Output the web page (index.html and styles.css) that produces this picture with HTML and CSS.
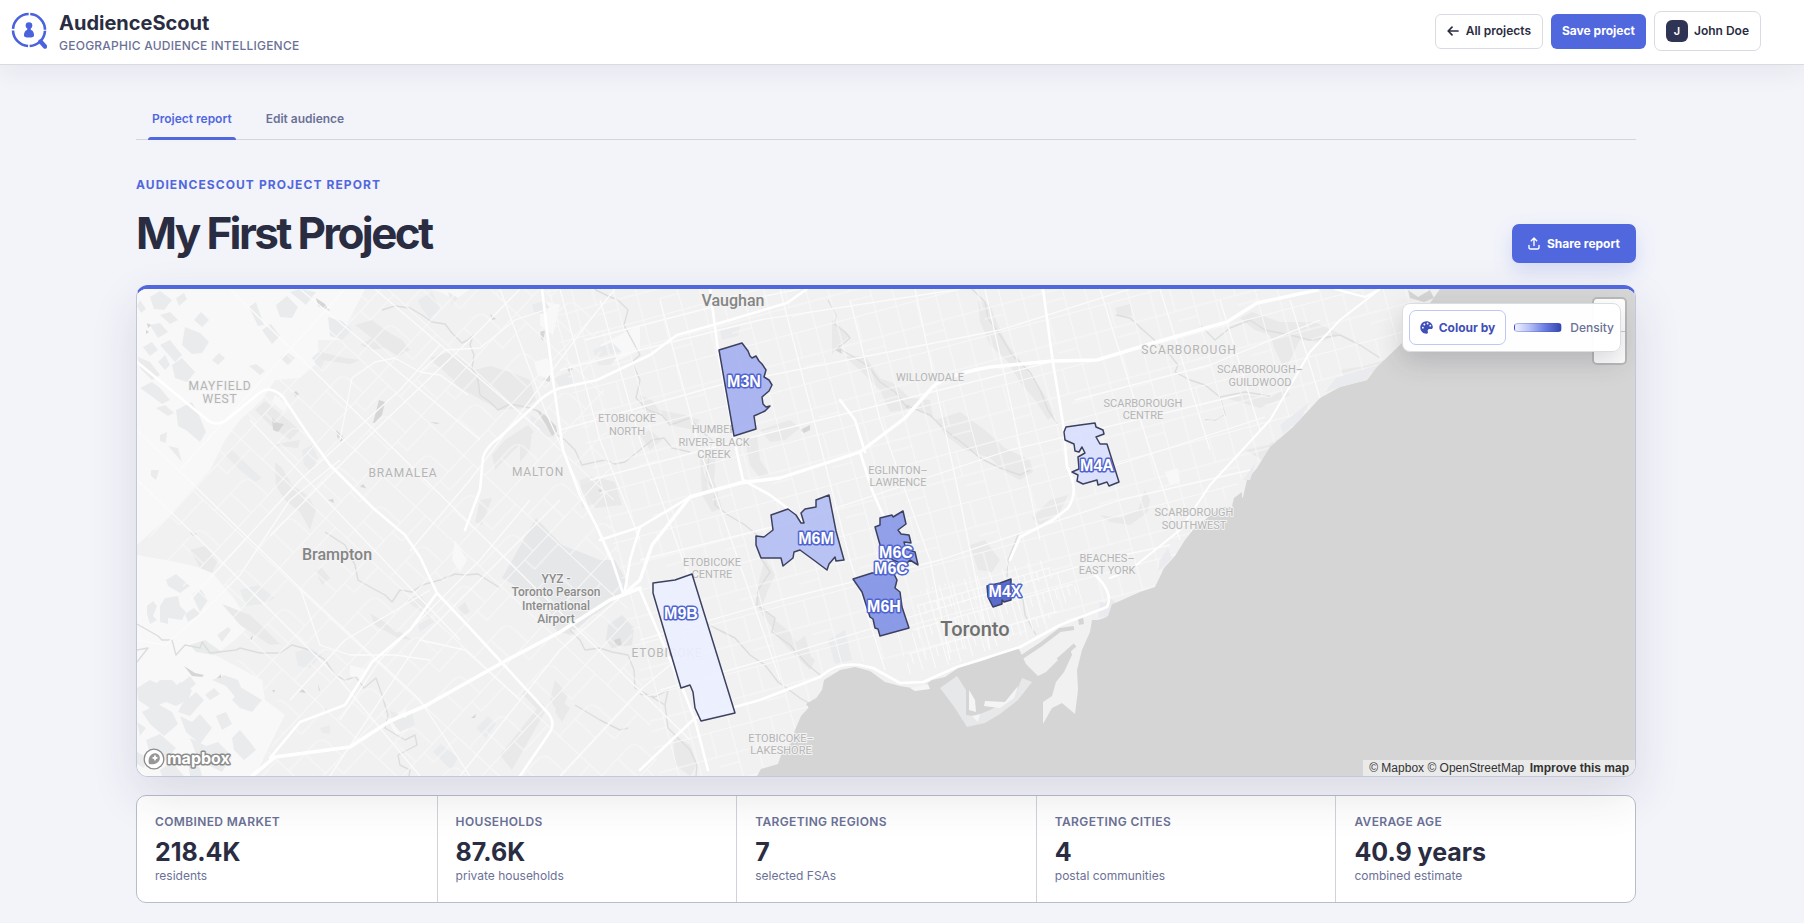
FILE: index.html
```html
<!DOCTYPE html>
<html lang="en">
<head>
<meta charset="utf-8">
<title>AudienceScout – My First Project</title>
<meta name="viewport" content="width=device-width, initial-scale=1">
<link rel="stylesheet" href="styles.css">
</head>
<body>
<header class="topbar">
  <a class="brand" href="#">
    <svg class="brand-mark" viewBox="0 0 36 38" aria-hidden="true">
      <circle cx="18" cy="18" r="16" fill="none" stroke="#4a62dc" stroke-width="2.6" stroke-dasharray="23.5 1.63" stroke-dashoffset="-0.8"/>
      <path d="M29.5 29.5 34 34.5" stroke="#4a62dc" stroke-width="4.4" stroke-linecap="round"/>
      <circle cx="18" cy="13.6" r="3.3" fill="#4a62dc"/>
      <path d="M16.3 16h3.4v2h-3.4z" fill="#4a62dc"/>
      <path d="M13 23.4c0-3.6 1.8-5.9 5-5.9s5 2.3 5 5.900c0 1.500-1.500 2.100-5 2.100s-5-.6-5-2.100z" fill="#4a62dc"/>
    </svg>
    <span class="brand-text">
      <span class="brand-name">AudienceScout</span>
      <span class="brand-tag">Geographic audience intelligence</span>
    </span>
  </a>
  <div class="actions">
    <button class="btn btn-outline" type="button">
      <svg width="12" height="12" viewBox="0 0 12 12" fill="none" stroke="currentColor" stroke-width="1.7" stroke-linecap="round" stroke-linejoin="round" aria-hidden="true"><path d="M11 6H1.200M5 2.200 1.200 6 5 9.800"/></svg>
      All projects
    </button>
    <button class="btn btn-primary" type="button">Save project</button>
    <button class="btn btn-user" type="button"><span class="avatar">J</span>John Doe</button>
  </div>
</header>

<main class="page">
  <nav class="tabs">
    <a class="tab tab-active" href="#report">Project report</a>
    <a class="tab" href="#audience">Edit audience</a>
  </nav>

  <section class="heading">
    <div>
      <p class="eyebrow">AudienceScout project report</p>
      <h1 class="title">My First Project</h1>
    </div>
    <button class="btn btn-share" type="button">
      <svg width="12" height="13" viewBox="0 0 12 13" fill="none" stroke="currentColor" stroke-width="1.400" stroke-linecap="round" stroke-linejoin="round" aria-hidden="true"><path d="M6 8.500V1.200M3.300 3.700 6 1l2.700 2.700M1 8.500v1.800A1.500 1.500 0 0 0 2.500 12h7a1.500 1.500 0 0 0 1.500-1.700V8.500"/></svg>
      Share report
    </button>
  </section>

  <section class="map" aria-label="Audience map">
    <svg class="map-canvas" viewBox="137 289 1498 487" preserveAspectRatio="xMidYMid slice" role="img" aria-label="Map of Toronto and Brampton">
      <defs>
        <pattern id="west-grid" width="70" height="58" patternUnits="userSpaceOnUse" patternTransform="rotate(-47 400 520)">
          <path d="M0 .5H70M.5 0V58M0 30H38Q48 30 48 40V58M24 30V58M36 0V14H70" fill="none" stroke="#f8f8f8" stroke-width="1"/>
        </pattern>
        <pattern id="east-grid" width="62" height="52" patternUnits="userSpaceOnUse" patternTransform="rotate(-15 900 520)">
          <path d="M0 .5H62M.5 0V52M22 0V52M42 0V26M0 26H22M42 36H62M22 26H62" fill="none" stroke="#f8f8f8" stroke-width="1"/>
        </pattern>
        <pattern id="core-grid" width="13" height="22" patternUnits="userSpaceOnUse" patternTransform="rotate(-16 960 620)">
          <path d="M0 .5H13M.5 0V22M6.500 0V11" fill="none" stroke="#fbfbfb" stroke-width="1"/>
        </pattern>
      </defs>

      <rect x="137" y="289" width="1498" height="487" fill="#f1f1f1"/>
      <!-- countryside -->
      <path fill="#f8f8f8" d="M137 289H365L350 318 340 340 318 340 318 362 300 378 275 380 262 400 240 420 225 440 210 470 165 520 137 545ZM137 555 165 560 190 565 212 572 235 600 250 625 235 640 215 655 262 680 265 700 285 715 270 745 255 776H137ZM430 289H470L455 300 440 292ZM540 300 560 305 553 335 540 325ZM600 345 640 325 640 350 615 362Z"/>
      <path fill="#f8f8f8" d="M275 395 288 405 284 412 272 402ZM455 540 467 560 460 572 452 560ZM350 665 368 670 362 680 350 676ZM388 720 406 708 408 730 396 736ZM534 362 548 358 552 378 538 376ZM1165 472 1178 468 1180 482 1170 485Z"/>

      <!-- fields -->
      <path fill="#eaebed" d="M185 327 200 333 209 342 202 353 192 354 182 345ZM194 320 201 312 209 320 202 327ZM249 307 256 302 264 325 258 326ZM276 305 287 296 298 307 292 318 280 317ZM262 330 271 324 280 336 272 344ZM290 292 300 289 316 292 306 305ZM328 317 342 321 352 330 342 340 330 336ZM312 358 321 350 327 355 320 370ZM280 358 288 353 295 358 288 365ZM212 360 219 353 225 358 218 365ZM249 366 256 364 265 371 260 375ZM418 300 432 292 440 308 430 319 420 306ZM448 292 458 298 452 305ZM140 300 146 309 141 313 137 306ZM150 297 160 291 172 300 164 310 154 309ZM176 298 184 293 187 299 179 306ZM160 315 170 312 178 320 170 324ZM150 325 160 323 168 332 158 338ZM143 347 152 342 158 350 150 356ZM160 345 170 340 182 355 175 362ZM138 357 150 362 160 375 152 380 140 368ZM158 362 165 355 170 365 165 370ZM172 365 182 358 195 372 187 382 175 378ZM140 388 152 382 160 388 170 400 162 404 150 395ZM176 410 192 402 198 413 206 432 200 442 186 430 178 426ZM156 408 165 405 174 413 168 416ZM160 435 167 432 166 443 160 441ZM168 446 178 448 182 462 176 455ZM151 470 159 470 156 480 151 476ZM302 450 312 445 318 458 312 472 304 465ZM225 455 232 450 255 472 262 478 255 482 240 470ZM166 580 176 574 190 586 180 593 168 586ZM147 606 153 601 157 606 153 616 157 620 150 624 147 614ZM160 606 165 598 178 596 180 606 186 612 182 620 168 618 168 624 160 622ZM185 614 194 608 200 614 188 622ZM192 595 200 588 208 600 200 612ZM217 635 228 627 231 630 222 642ZM190 645 205 640 222 652 214 655 196 652ZM137 688 150 680 172 690 180 682 192 690 188 700 176 706 166 702 150 708 138 700ZM158 693 150 690 160 680 172 680 184 692ZM180 684 190 676 196 684 186 692ZM196 692 204 700 190 716 178 712 182 704ZM205 695 214 688 220 694 210 700ZM212 680 224 675 238 680 242 690 236 698 226 686ZM232 700 242 688 262 700 252 712 240 708ZM142 712 158 704 172 712 178 724 164 736 150 724ZM137 722 146 728 140 736ZM180 716 192 722 200 714 212 728 200 744 186 732ZM216 716 226 712 232 724 222 730ZM146 740 160 734 176 748 164 762 150 754ZM190 738 206 746 218 742 232 756 222 772 206 764 196 754ZM232 738 240 730 250 742 256 750 244 760 234 750ZM137 752 148 758 144 768 137 764ZM160 770 172 762 184 776H162ZM188 760 200 768 202 776H190ZM240 590 258 585 275 598 262 604 246 606ZM295 652 310 648 322 655 310 668 298 666ZM405 600 420 594 428 606 430 618 424 614ZM418 625 430 618 434 622 420 632ZM433 752 441 744 458 758 451 770ZM476 728 488 716 496 724 486 738ZM320 728 330 725 330 734 322 733ZM390 710 405 718 412 712 415 725 400 732 392 722ZM554 378 570 372 575 382 560 388ZM530 415 540 420 555 437 546 437 532 425ZM532 305 544 300 550 308 543 314 534 312ZM593 350 612 342 622 352 610 365 598 365ZM580 480 592 476 602 500 582 508ZM720 330 740 326 738 336 722 340ZM886 395 900 392 912 400 905 410 890 412ZM828 640 845 630 852 660 835 664Z"/>
      <!-- airport -->
      <path fill="#e6e7e9" d="M502 578 528 532 536 518 562 545 580 552 600 560 615 560 626 580 622 595 598 612 575 630 560 625 540 600 522 590ZM552 625 570 612 572 635 558 632ZM608 625 622 615 634 628 632 645 612 648 606 640Z"/>
      <!-- valleys and parks -->
      <path fill="#e9e9ea" d="M355 325 372 320 388 332 402 340 410 350 398 356 385 348 372 350 360 345 372 338ZM430 358 450 352 475 370 490 366 510 372 530 380 536 400 525 408 500 410 478 398 460 388 445 375ZM320 352 345 358 360 360 350 364 322 360ZM255 410 265 401 300 430 290 440 270 425ZM270 445 300 440 298 448 280 446ZM275 462 282 468 292 485 308 496 316 510 310 530 300 512 285 500 276 486ZM190 550 205 546 218 560 212 573 200 568ZM222 604 250 615 268 632 280 644 270 645 240 625ZM315 570 322 568 330 578 322 585ZM370 613 400 632 412 640 398 638 375 625ZM492 455 505 440 528 425 534 432 512 452 495 470ZM520 445 532 432 530 450 520 462ZM582 486 600 478 615 482 622 505 595 508ZM640 395 652 400 660 412 650 418 642 408ZM660 410 685 415 700 420 695 430 670 425ZM640 435 650 430 662 440 650 450ZM700 455 716 455 714 480 722 508 712 512 702 495ZM745 440 757 436 760 460 770 475 760 478 750 465ZM760 430 790 420 800 428 785 440 770 442ZM832 320 842 328 850 336 838 345 832 355 832 338ZM844 356 865 356 880 378 895 384 910 398 930 400 933 418 912 408 890 412 880 390 862 372ZM978 300 990 305 1000 330 1008 345 1020 360 1030 375 1045 395 1055 415 1048 420 1035 400 1020 382 1008 362 990 345 980 322ZM935 420 960 412 985 430 1005 448 1030 460 1033 472 1020 480 1005 472 990 458 965 450 945 435ZM1115 308 1130 304 1132 316 1118 316ZM1240 318 1252 312 1280 322 1315 322 1340 334 1320 342 1300 340 1285 370 1275 350 1270 335 1255 330ZM1340 370 1365 366 1385 360 1375 372 1345 378ZM1225 398 1245 395 1270 398 1285 388 1290 395 1260 408ZM1245 450 1268 445 1280 438 1262 460ZM1145 490 1150 500 1148 512 1140 518 1130 525 1110 522 1100 515 1120 518 1138 510ZM1050 500 1068 495 1060 512 1040 525 1032 518ZM970 545 985 540 1000 560 992 572 978 570ZM765 558 775 575 768 590 762 606 775 620 790 632 800 648 815 660 810 670 795 655 780 640 768 622 755 605 758 585ZM673 735 690 745 697 765 690 776 675 765ZM480 500 492 498 482 525 475 522ZM458 608 465 602 470 612 462 616ZM555 680 568 695 560 715 550 700ZM560 700 570 708 562 722 555 712ZM500 755 540 705 545 712 512 770ZM525 690 545 706 540 712 522 694ZM1110 598 1120 606 1108 620 1098 612ZM792 645 805 636 812 660 800 655Z"/>
      <!-- rivers and ponds -->
      <g fill="none" stroke="#dcdddd" stroke-width="1.400" stroke-linejoin="round">
        <path d="M382 310 395 306 410 308 422 315 432 322 445 324 452 333 462 343 468 340 473 335 470 345 474 355 472 368 478 380 480 395 490 402 498 410 510 404 530 408 540 412 552 432 565 440 575 450 582 465 595 462 605 460 615 464 625 462 640 450 652 440 664 438 672 448 690 452"/>
        <path d="M594 289 608 296 618 300 628 310 624 325 632 340 640 355 632 362 640 380 636 398 648 410 662 415 670 425 690 418 700 430 712 440 708 465 706 480 715 490 715 505 728 515 745 525 757 535 762 560 770 572 758 590 757 605 775 618 772 632 790 645 808 665 820 675"/>
        <path d="M325 532 345 545 355 565 358 580 372 588 385 595 392 602 400 590 412 592 422 585 440 580 455 574 465 575 478 574 500 588"/>
        <path d="M137 624 158 636 162 640 172 640 176 655 185 645 200 648 202 642 210 653 236 650 240 648 260 653 280 653 292 645 310 650 325 660 335 675 345 680 356 677 364 688 376 678 382 695 388 715 385 728 405 740 415 735 417 745 398 755 400 765 410 770 409 776M137 650 148 648 137 662"/>
        <path d="M570 630 580 640 585 650 600 648 612 652 628 655 634 670 635 688 650 696 665 705M575 705 600 720 620 730 628 728M640 694 655 697 668 690 665 705 668 728 680 740 690 750 697 765 696 776"/>
        <path d="M828 300 836 315 835 325 845 332 850 338 838 348 852 356 868 366 880 382 895 392 905 405 930 415 945 430 965 445 980 458 1000 468 1020 475 1030 470"/>
        <path d="M972 289 985 302 988 318 1000 335 1012 355 1030 372 1040 390 1048 410 1058 425M1007 577 1008 560 1018 535M1022 592 1025 615 1036 635"/>
        <path d="M1116 315 1130 318 1143 330 1158 343 1170 355 1178 365 1175 372 1190 380 1205 385 1220 397 1225 415 1215 420 1205 420M1220 397 1245 392 1270 396M1200 325 1215 340 1230 328 1250 320 1265 330 1290 335 1310 340 1340 335 1360 345 1380 358"/>
        <path d="M700 620 715 628 735 638 750 655 765 665 778 682 800 698 812 705"/>
      </g>
      <path fill="#d6d6d6" d="M373 423 379 400 385 402 382 415 375 423ZM272 418 278 423 284 424 278 432 273 430ZM536 409 545 415 556 426 557 432 552 436 546 425ZM293 393 296 391 299 394 296 397ZM147 323 151 325 148 328ZM146 330 149 332 146 334ZM316 298 325 304 330 311 318 306ZM328 500 333 499 334 503ZM338 436 344 438 341 442ZM540 331 545 331 543 341 541 338ZM360 485 367 489 362 487ZM336 430 343 436 338 440ZM430 422 440 423 436 424ZM360 487 363 484 366 488ZM184 666 195 673 204 675 202 677 192 676ZM614 640 620 638 622 645 616 646ZM190 531 197 534 192 536ZM249 640 253 635 252 640ZM217 678 221 674 221 678ZM272 690 275 690 274 693ZM299 692 303 689 306 693ZM318 684 320 690 319 691ZM323 708 327 709 326 711ZM471 718 476 714 475 718ZM800 430 810 425 810 430 804 433ZM835 350 840 345 842 354ZM905 407 909 405 908 409ZM490 314 496 319 492 320ZM543 380 550 375 550 382ZM566 366 573 369 569 372ZM598 489 602 490 600 493Z"/>

      <!-- local streets -->
      <path fill="url(#west-grid)" d="M330 289H595L620 570 660 776H255L290 715 230 655 165 560 137 520 250 410Z"/>
      <path fill="url(#east-grid)" d="M545 289H1440L1365 380 1250 468 1155 587 1107 602 1018 645 845 663 758 776H660L620 570Z"/>
      <path fill="url(#core-grid)" d="M920 590 1040 560 1080 590 1040 628 960 662 905 675Z"/>

      <!-- lake -->
      <path fill="#d5d5d5" d="M757 776 761 769 778 764 782 752 792 742 795 730 801 716 812 704 822 690 824 680 840 670 855 667 870 671 885 682 900 686 912 688 925 685 932 680 945 677 958 668 985 660 1018 647 1026 664 1038 676 1046 672 1070 648 1072 655 1064 672 1056 682 1052 696 1043 702 1043 724 1052 708 1062 703 1075 714 1078 690 1077 670 1082 650 1090 632 1092 620 1098 620 1107 617 1104 608 1122 600 1140 592 1155 587 1164 568 1175 556 1185 540 1193 530 1220 507 1232 507 1243 497 1247 480 1257 468 1270 447 1293 427 1320 398 1340 387 1367 380 1377 367 1402 343 1440 289H1635V776Z"/>
      <path fill="#e7e8ea" d="M940 688 957 676 966 690 966 715 975 716 990 710 1005 702 1018 688 1022 678 1032 682 1018 700 1000 714 985 723 967 727 955 708Z"/>
      <path fill="#f5f5f5" d="M969 690 975 700 976 712 969 710ZM985 701 1005 702 1018 686 1014 698 1000 708 984 706ZM972 716 980 714 978 722ZM910 688 928 684 930 689 915 691Z"/>
      <path fill="none" stroke="#d5d5d5" stroke-width="4" d="M1022 657 1040 645 1060 630 1074 628M1075 645 1058 660"/>
      <path fill="#d5d5d5" d="M1234 498 1242 492 1242 505 1232 506ZM1078 619 1083 617 1084 624 1079 625ZM806 704 816 698 812 712ZM1408 290 1418 297 1430 290 1434 298 1424 302 1410 298ZM810 718 820 708 818 725Z"/>
      <path fill="#e9ebee" d="M1336 378 1350 374 1375 366 1367 380 1340 387 1325 392ZM1280 425 1310 402 1300 420 1283 434ZM1243 480 1256 462 1250 480ZM1160 560 1168 548 1172 558 1158 572ZM1100 602 1112 604 1108 616 1098 618Z"/>

      <!-- arterials -->
      <g fill="none" stroke="#fbfbfb" stroke-width="1.300" stroke-linejoin="round">
        <path d="M137 430 300 588 420 700 470 776M230 289 410 465 560 612 690 740M300 289 480 440M137 480 200 540 340 680 420 776M375 289 540 430M250 420 460 640M410 551 470 480 590 320 615 289M270 536 365 440 480 330 520 289M190 600 240 545 300 480 400 390 440 345M330 776 420 640 560 500M290 700 345 640 430 590M460 776 560 650 640 580M345 289 180 470M560 776 640 690 700 640M340 720 380 660 480 560 530 500"/>
        <path d="M137 640 165 645 205 610 240 575 290 500 340 460M300 588 320 645 350 655 395 655 430 660M420 640 465 650 520 700M340 440 352 378 375 362 395 358 420 372 440 375 468 395M420 372 445 350 480 348 515 320 560 305"/>
        <path d="M500 289 545 410 585 500 610 560M560 289 600 440 640 540M585 340 720 305 800 289M560 370 760 320 960 289M560 430 720 385 1000 330 1130 289M590 480 780 430 1000 375 1050 362M640 560 800 520 1010 450 1240 395M640 640 780 600 940 560 1120 500 1250 470M660 690 800 650 900 620 1100 560 1170 545M780 289 850 560 885 670M850 300 880 420 930 560 950 660M915 289 960 500 990 650M985 289 1010 400 1040 540M1100 289 1150 450 1180 540M1160 289 1210 450M1220 300 1260 430M1290 300 1320 398M660 300 700 450 780 680M1070 480 1265 417M1075 400 1210 365 1320 320M600 300 640 440 690 580"/>
      </g>

      <!-- highways -->
      <g fill="none" stroke="#fff" stroke-width="2.600" stroke-linejoin="round" stroke-linecap="round">
        <path d="M137 362 205 418Q216 429 229 418L258 394Q270 384 283 397L305 430 330 465 373 508 405 535 420 557 437 593 470 628 504 665 547 712Q556 722 550 732L520 776"/>
        <path stroke-width="3.600" d="M252 776 275 757 350 747 390 721 425 706 507 660 560 632 610 600 640 588"/>
        <path d="M437 593 410 630 372 662 345 705 300 722 270 758M465 530 480 490 483 457Q486 447 500 437L533 407Q545 393 560 388L597 380 650 355 677 335 713 325 787 303 807 289"/>
        <path d="M542 289 553 380 563 450 580 495 597 527 612 560 623 593M640 527 630 560 625 590"/>
        <path stroke-width="3.400" d="M623 595 640 580 652 545 690 497 740 483 780 478 860 452 905 418 930 390Q940 376 990 367L1052 361 1097 360 1153 343 1227 322 1257 303 1317 290"/>
        <path d="M600 540 640 527 690 497M710 289 718 350 737 453 743 480 770 495 790 510 810 530M1043 289 1053 363 1063 423 1067 467Q1080 490 1068 508L1053 520 1020 537 1010 560M860 452 872 490 885 520M840 400 855 420 865 452"/>
        <path d="M640 590 682 687 695 720 708 770M640 770 695 718 760 700 820 677Q836 662 860 665L873 668 900 683 923 682 957 667 1020 647 1060 625 1107 607Q1115 592 1090 570"/>
        <path stroke-width="2" d="M1380 289 1340 320 1310 352 1270 420 1210 485 1180 530 1130 570 1110 578M1335 289 1365 297 1380 289"/>
      </g>

      <!-- place names -->
      <g class="place">
        <g class="place-wide">
          <text x="220" y="390">MAYFIELD</text><text x="220" y="403">WEST</text>
          <text x="403" y="477">BRAMALEA</text><text x="538" y="476">MALTON</text>
          <text x="667" y="657">ETOBICOKE</text><text x="1189" y="354">SCARBOROUGH</text>
        </g>
        <text x="627" y="422">ETOBICOKE</text><text x="627" y="435">NORTH</text>
        <text x="714" y="433">HUMBER</text><text x="714" y="446">RIVER–BLACK</text><text x="714" y="458">CREEK</text>
        <text x="930" y="381">WILLOWDALE</text>
        <text x="898" y="474">EGLINTON–</text><text x="898" y="486">LAWRENCE</text>
        <text x="712" y="566">ETOBICOKE</text><text x="712" y="578">CENTRE</text>
        <text x="781" y="742">ETOBICOKE–</text><text x="781" y="754">LAKESHORE</text>
        <text x="1260" y="373">SCARBOROUGH–</text><text x="1260" y="386">GUILDWOOD</text>
        <text x="1143" y="407">SCARBOROUGH</text><text x="1143" y="419">CENTRE</text>
        <text x="1194" y="516">SCARBOROUGH</text><text x="1194" y="529">SOUTHWEST</text>
        <text x="1107" y="562">BEACHES–</text><text x="1107" y="574">EAST YORK</text>
      </g>
      <g class="place-city">
        <text x="337" y="560">Brampton</text><text x="733" y="306">Vaughan</text>
        <text class="place-metro" x="975" y="636">Toronto</text>
      </g>
      <g class="place-poi">
        <text x="556" y="583">YYZ -</text><text x="556" y="596">Toronto Pearson</text><text x="556" y="610">International</text><text x="556" y="623">Airport</text>
      </g>

      <!-- selected regions -->
      <g stroke="#3d4160" stroke-width="1.500" stroke-linejoin="round" fill-opacity=".92">
        <path fill="#a5b1f0" d="M719 350 742 343 748 351 750 356 752 358 756 356 759 361 762 364 766 370 764 377 769 380 772 385 769 391 762 397 763 404 766 407 770 406 765 411 754 416 756 429 734 436Z"/>
        <path fill="#b3bef3" d="M756 536 764 537 773 530 771 515 788 509 796 515 801 523 804 523 801 513 805 509 816 507 816 500 829 495 836 531 844 560 836 561 835 557 829 564 827 570 815 561 800 550 794 552 793 558 783 566 781 558 761 558 756 545Z"/>
        <path fill="#8a99e9" d="M875 527 880 525 880 518 892 515 893 517 903 511 906 524 898 530 901 534 909 535 911 543 904 542 906 549 915 552 918 565 910 560 905 565 893 560 882 552Z"/>
        <path fill="#8192e6" d="M853 579 872 573 893 572 897 580 895 588 900 592 902 607 909 628 880 636 878 629 875 628 873 619 870 617 862 592Z"/>
        <path fill="#d9dffd" d="M1066 427 1080 425 1095 423 1096 427 1103 430 1104 434 1096 437 1100 444 1107 444 1119 482 1109 486 1107 482 1098 485 1097 480 1083 484 1077 481 1078 475 1072 472 1079 469 1078 457 1085 453 1082 447 1079 452 1075 451 1074 444 1065 440 1064 432Z"/>
        <path fill="#4d60c8" d="M987 586 1000 583 1011 579 1011 600 1004 602 1002 600 1002 604 993 607 988 597Z"/>
        <path fill="#ecefff" d="M653 583 675 580 692 574 735 713 701 721 695 708 693 692 690 685 681 688 653 593Z"/>
      </g>
      <g class="region-label">
        <text x="744" y="387">M3N</text><text x="816" y="544">M6M</text>
        <text x="896" y="558">M6C</text><text x="891" y="574">M6C</text>
        <text x="884" y="612">M6H</text><text x="1097" y="471">M4A</text>
        <text x="1005" y="597">M4X</text><text x="681" y="619">M9B</text>
      </g>
    </svg>

    <a class="map-logo" href="#mapbox" aria-label="Mapbox">
      <svg width="100" height="24" viewBox="0 0 100 24">
        <circle cx="12" cy="12" r="9.800" fill="#fff" stroke="#8c8c8c" stroke-width="1.300"/>
        <path d="M7 17c-1.200-4.600.1-8 2.800-9.800 2.400-1.600 5.500-1.200 7 .8 1.800 2.400 1.200 5.400-.9 7.200C13.700 17 10.600 17.600 7 17z" fill="#979797"/>
        <path d="m13 7.500 1.100 2.300 2.300 1.100-2.300 1.100L13 14.300 11.900 12l-2.300-1.100 2.300-1.100z" fill="#fff"/>
        <text class="map-logo-text" x="25" y="17">mapbox</text>
      </svg>
    </a>
    <div class="map-zoom">
      <button type="button" aria-label="Zoom in"></button>
      <button type="button" aria-label="Zoom out"></button>
    </div>
    <div class="legend">
      <button class="legend-button" type="button">
        <svg width="13" height="13" viewBox="0 0 14 14" aria-hidden="true"><path fill="#3f4fb8" fill-rule="evenodd" d="M7 .4C3.200.4.3 3.400.3 7s2.900 6.700 6.600 6.700c1.300 0 1.900-.9 1.600-1.900-.4-1.200-.6-3 1.400-3.200h2c1.200 0 1.900-.8 1.900-1.900C13.600 3 10.700.4 7 .4ZM3.100 8.200a1 1 0 1 1 0-2 1 1 0 0 1 0 2Zm1.600-3.400a1 1 0 1 1 0-2 1 1 0 0 1 0 2ZM8.200 3.700a1 1 0 1 1 0-2 1 1 0 0 1 0 2Zm2.900 2.300a1 1 0 1 1 0-2 1 1 0 0 1 0 2Z"/></svg>
        Colour by
      </button>
      <span class="legend-ramp"></span>
      <span class="legend-name">Density</span>
    </div>
    <div class="attribution">
      <a href="#mb">© Mapbox</a> <a href="#osm">© OpenStreetMap</a> <a class="attribution-edit" href="#improve">Improve this map</a>
    </div>
  </section>

  <dl class="stats">
    <div class="stat"><dt class="stat-label">Combined market</dt><dd class="stat-value">218.4K</dd><dd class="stat-note">residents</dd></div>
    <div class="stat"><dt class="stat-label">Households</dt><dd class="stat-value">87.6K</dd><dd class="stat-note">private households</dd></div>
    <div class="stat"><dt class="stat-label">Targeting regions</dt><dd class="stat-value">7</dd><dd class="stat-note">selected FSAs</dd></div>
    <div class="stat"><dt class="stat-label">Targeting cities</dt><dd class="stat-value">4</dd><dd class="stat-note">postal communities</dd></div>
    <div class="stat"><dt class="stat-label">Average age</dt><dd class="stat-value">40.9 years</dd><dd class="stat-note">combined estimate</dd></div>
  </dl>
</main>
</body>
</html>
```

FILE: styles.css
```css
:root {
  --ink: #2a2d42;
  --muted: #6b7196;
  --accent: #5167de;
  --line: #d9dbe3;
}

* { box-sizing: border-box; }

body {
  margin: 0;
  background: #f3f4fa;
  color: var(--ink);
  font-family: Inter, "Liberation Sans", sans-serif;
  font-size: 12px;
  line-height: 16px;
}

a { color: inherit; text-decoration: none; }
button { font: inherit; color: inherit; cursor: pointer; }

.topbar {
  display: flex;
  align-items: center;
  justify-content: space-between;
  height: 65px;
  padding: 0 43px 2px 11px;
  background: #fff;
  border-bottom: 1px solid var(--line);
  box-shadow: 0 8px 24px rgba(38, 40, 50, .06);
}

.brand { display: flex; align-items: center; gap: 12px; }
.brand-mark { width: 36px; height: 38px; }
.brand-text { display: flex; flex-direction: column; padding-top: 3px; }
.brand-name { font-size: 20px; line-height: 26px; font-weight: 700; }
.brand-tag {
  font-weight: 500;
  line-height: 20px;
  letter-spacing: .02em;
  color: var(--muted);
  text-transform: uppercase;
}

.actions { display: flex; align-items: center; gap: 8px; }

.btn {
  display: inline-flex;
  align-items: center;
  justify-content: center;
  height: 35px;
  padding: 0 11px;
  border: 1px solid transparent;
  border-radius: 6px;
  font-weight: 700;
}
.btn-outline { gap: 7px; background: #fff; border-color: var(--line); font-weight: 600; }
.btn-primary { padding: 0 10px; background: var(--accent); color: #fff; }
.btn-user { gap: 6px; height: 40px; background: #fff; border-color: var(--line); font-weight: 600; border-radius: 7px; }
.btn-share {
  gap: 7px;
  height: 39px;
  padding: 0 15px;
  background: var(--accent);
  color: #fff;
  border-radius: 7px;
  box-shadow: 0 8px 20px rgba(81, 103, 222, .2);
}
.avatar {
  display: grid;
  place-items: center;
  width: 22px;
  height: 22px;
  border-radius: 6px;
  background: #2f3354;
  color: #fff;
  font-size: 11px;
}

.page {
  max-width: 1500px;
  margin: 0 auto;
  padding: 36px 0 20px;
}
@media (min-width: 1600px) {
  .page { margin-right: calc((100% - 32px - 1500px) / 2 + 32px); }
}

.tabs {
  display: flex;
  gap: 26px;
  padding-left: 12px;
  border-bottom: 1px solid #d3d6de;
}
.tab {
  padding: 10px 4px;
  margin-bottom: -1px;
  border-bottom: 3px solid transparent;
  font-weight: 600;
  color: var(--muted);
}
.tab-active { position: relative; color: var(--accent); }
.tab-active::after {
  content: "";
  position: absolute;
  inset: auto 0 -3px;
  height: 3px;
  border-radius: 3px 3px 0 0;
  background: var(--accent);
}

.heading {
  display: flex;
  align-items: flex-end;
  justify-content: space-between;
  padding: 37px 0 22px;
}
.eyebrow {
  margin: 0;
  font-weight: 700;
  letter-spacing: .09em;
  color: var(--accent);
  text-transform: uppercase;
}
.title {
  margin: 16px 0 6px;
  font-size: 44px;
  line-height: 48px;
  font-weight: 700;
  letter-spacing: -.06em;
}

.map {
  position: relative;
  z-index: 1;
  overflow: hidden;
  border: 1px solid #c3c7dc;
  border-top: 4px solid var(--accent);
  border-radius: 12px;
  box-shadow: 0 18px 48px rgba(42, 45, 66, .12);
}
.map-canvas { display: block; width: 100%; height: auto; aspect-ratio: 1498 / 487; }

.place, .place-city, .place-poi {
  font-family: Roboto, sans-serif;
  text-anchor: middle;
  paint-order: stroke;
  stroke: #f3f3f3;
  stroke-width: 2px;
  stroke-linejoin: round;
}
.place { font-size: 11px; fill: #b5b5b5; }
.place-wide { font-size: 12px; letter-spacing: .07em; }
.place-city { font-size: 16px; font-weight: 500; fill: #858585; }
.place-metro { font-size: 20px; fill: #707070; }
.place-poi { font-size: 12px; font-weight: 500; fill: #8c8c8c; }

.region-label {
  font-family: "Liberation Sans", Arial, sans-serif;
  font-size: 16px;
  font-weight: 700;
  text-anchor: middle;
  fill: #fff;
  paint-order: stroke;
  stroke: #5064d0;
  stroke-width: 3px;
  stroke-linejoin: round;
}

.map-logo { position: absolute; left: 5px; bottom: 5px; line-height: 0; }
.map-logo-text {
  font-family: Inter, sans-serif;
  font-size: 16px;
  font-weight: 700;
  fill: #fff;
  stroke: #8c8c8c;
  stroke-width: 3px;
  stroke-linejoin: round;
  paint-order: stroke;
}

.map-zoom {
  position: absolute;
  top: 8px;
  right: 8px;
  display: flex;
  flex-direction: column;
  border: 2px solid #b9b9ba;
  border-radius: 5px;
  background: #fff;
}
.map-zoom button { width: 31px; height: 32px; padding: 0; border: 0; background: none; }
.map-zoom button + button { border-top: 1px solid #ccc; }

.legend {
  position: absolute;
  top: 14px;
  right: 14px;
  display: flex;
  align-items: center;
  gap: 8px;
  padding: 6px;
  border: 1px solid #dcdde0;
  border-radius: 8px;
  background: rgba(255, 255, 255, .97);
  box-shadow: 0 10px 26px rgba(42, 45, 66, .18);
}
.legend-button {
  display: flex;
  align-items: center;
  gap: 6px;
  height: 35px;
  padding: 0 10px;
  border: 1px solid #bfc7f5;
  border-radius: 7px;
  background: #fff;
  color: #3f4fb8;
  font-weight: 700;
}
.legend-ramp {
  width: 48px;
  height: 9px;
  border: 1px solid rgba(63, 79, 184, .3);
  border-radius: 4px;
  background: linear-gradient(90deg, #eef0ff, #b9c3f6 30%, #6a7de3 65%, #3446ae);
}
.legend-name { font-weight: 500; color: var(--muted); }

.attribution {
  position: absolute;
  right: 0;
  bottom: 0;
  padding: 0 6px;
  background: rgba(255, 255, 255, .5);
  color: #333;
  font-family: "Liberation Sans", Arial, sans-serif;
}
.attribution-edit { margin-left: 2px; font-weight: 700; }

.stats {
  display: grid;
  grid-template-columns: repeat(5, 1fr);
  margin: 18px 0 0;
  border: 1px solid #b9bccb;
  border-radius: 10px;
  background: #fff;
}
.stat { padding: 18px; }
.stat + .stat { border-left: 1px solid #d0d2dc; }
.stat dd { margin: 0; }
.stat-label { font-weight: 600; letter-spacing: .03em; color: var(--muted); text-transform: uppercase; }
.stat .stat-value { margin-top: 6px; font-size: 25px; line-height: 32px; font-weight: 700; }
.stat-note { color: var(--muted); }
```
